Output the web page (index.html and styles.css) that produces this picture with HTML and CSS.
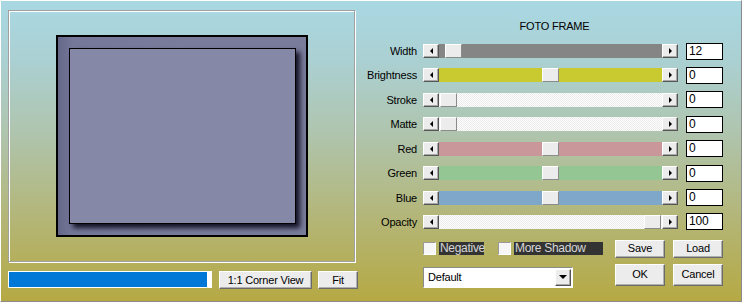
FILE: index.html
```html
<!DOCTYPE html>
<html lang="en">

<head>
    <meta charset="UTF-8">
    <title>Foto Frame</title>
    <link rel="stylesheet" href="styles.css">
</head>

<body>
    <div class="window">
        <div class="left">
            <div class="preview">
                <div class="frame">
                    <div class="photo"></div>
                </div>
            </div>
            <div class="bottom-bar">
                <div class="progress">
                    <div class="progress-fill" style="width: 198px"></div>
                </div>
                <button class="btn corner">1:1 Corner View</button>
                <button class="btn fit">Fit</button>
            </div>
        </div>

        <div class="right">
            <div class="title">FOTO FRAME</div>

            <div class="row">
                <span class="label">Width</span>
                <div class="slider">
                    <span class="arrow-btn"><i class="arrow-left"></i></span>
                    <div class="track track-gray"><span class="thumb" style="margin-left: 6px"></span></div>
                    <span class="arrow-btn"><i class="arrow-right"></i></span>
                </div>
                <div class="value">12</div>
            </div>
            <div class="row">
                <span class="label">Brightness</span>
                <div class="slider">
                    <span class="arrow-btn"><i class="arrow-left"></i></span>
                    <div class="track track-yellow"><span class="thumb" style="margin-left: 103px"></span></div>
                    <span class="arrow-btn"><i class="arrow-right"></i></span>
                </div>
                <div class="value">0</div>
            </div>
            <div class="row">
                <span class="label">Stroke</span>
                <div class="slider">
                    <span class="arrow-btn"><i class="arrow-left"></i></span>
                    <div class="track track-light"><span class="thumb" style="margin-left: 1px"></span></div>
                    <span class="arrow-btn"><i class="arrow-right"></i></span>
                </div>
                <div class="value">0</div>
            </div>
            <div class="row">
                <span class="label">Matte</span>
                <div class="slider">
                    <span class="arrow-btn"><i class="arrow-left"></i></span>
                    <div class="track track-light"><span class="thumb" style="margin-left: 1px"></span></div>
                    <span class="arrow-btn"><i class="arrow-right"></i></span>
                </div>
                <div class="value">0</div>
            </div>
            <div class="row">
                <span class="label">Red</span>
                <div class="slider">
                    <span class="arrow-btn"><i class="arrow-left"></i></span>
                    <div class="track track-red"><span class="thumb" style="margin-left: 103px"></span></div>
                    <span class="arrow-btn"><i class="arrow-right"></i></span>
                </div>
                <div class="value">0</div>
            </div>
            <div class="row">
                <span class="label">Green</span>
                <div class="slider">
                    <span class="arrow-btn"><i class="arrow-left"></i></span>
                    <div class="track track-green"><span class="thumb" style="margin-left: 103px"></span></div>
                    <span class="arrow-btn"><i class="arrow-right"></i></span>
                </div>
                <div class="value">0</div>
            </div>
            <div class="row">
                <span class="label">Blue</span>
                <div class="slider">
                    <span class="arrow-btn"><i class="arrow-left"></i></span>
                    <div class="track track-blue"><span class="thumb" style="margin-left: 103px"></span></div>
                    <span class="arrow-btn"><i class="arrow-right"></i></span>
                </div>
                <div class="value">0</div>
            </div>
            <div class="row">
                <span class="label">Opacity</span>
                <div class="slider">
                    <span class="arrow-btn"><i class="arrow-left"></i></span>
                    <div class="track track-light"><span class="thumb" style="margin-left: 205px"></span></div>
                    <span class="arrow-btn"><i class="arrow-right"></i></span>
                </div>
                <div class="value">100</div>
            </div>

            <div class="options">
                <span class="checkbox"></span>
                <span class="check-label negative">Negative</span>
                <span class="checkbox shadow-box"></span>
                <span class="check-label more-shadow">More Shadow</span>
                <button class="btn save">Save</button>
                <button class="btn load">Load</button>
            </div>

            <div class="actions">
                <div class="dropdown">
                    <span class="dropdown-text">Default</span>
                    <span class="dropdown-btn"><i class="arrow-down"></i></span>
                </div>
                <button class="btn ok">OK</button>
                <button class="btn cancel">Cancel</button>
            </div>
        </div>
    </div>
</body>

</html>
```

FILE: styles.css
```css
* {
    box-sizing: border-box;
}

body {
    margin: 0;
    background-color: #fff;
    font-family: "Liberation Sans", Arial, sans-serif;
    font-size: 11px;
    letter-spacing: -0.2px;
    color: #000;
}

.window {
    width: 742px;
    height: 302px;
    display: flex;
    border-top: 1px solid #fff;
    border-left: 1px solid #fff;
    border-right: 1px solid #8a8a8a;
    border-bottom: 1px solid #8a8a8a;
    background: linear-gradient(#a9d8e3 0%, #abd0d2 20%, #afc4ac 45%, #b3b77c 70%, #b6a944 100%);
}

/* preview side */
.left {
    width: 360px;
    padding: 9px 0 0 7px;
}

.preview {
    width: 347px;
    height: 252px;
    border: 1px solid #a0a0a0;
    box-shadow: 1px 1px 0 #fff, inset 1px 1px 0 #fff;
    display: flex;
    align-items: center;
    justify-content: center;
}

.frame {
    width: 252px;
    height: 202px;
    border: 2px solid #000;
    padding: 11px 10px 11px 11px;
    background: linear-gradient(90deg, #66688a 0%, #76789a 6%, #7a7c9c 50%, #7a7c9c 100%);
}

.photo {
    width: 227px;
    height: 176px;
    border: 1px solid #000;
    background-color: #8588a7;
    box-shadow: 4px 4px 5px rgba(8, 8, 24, 0.9);
}

.bottom-bar {
    display: flex;
    margin-top: 9px;
    height: 18px;
}

.progress {
    width: 204px;
    height: 17px;
    padding: 1px;
    background-color: #fff;
}

.progress-fill {
    height: 100%;
    background-color: #0078d7;
}

/* buttons */
.btn {
    font-family: inherit;
    font-size: 11px;
    letter-spacing: -0.2px;
    color: #000;
    padding: 0;
    background-color: #ececec;
    border: 1px solid;
    border-color: #fff #6a6a6a #6a6a6a #fff;
    box-shadow: inset -1px -1px 0 #b0b0b0;
    line-height: 1;
}

.corner {
    width: 93px;
    height: 18px;
    margin-left: 7px;
}

.fit {
    width: 40px;
    height: 18px;
    margin-left: 6px;
}

/* controls side */
.right {
    width: 379px;
    padding-top: 18px;
}

.title {
    height: 14px;
    line-height: 14px;
    text-align: center;
    padding-left: 8px;
    margin-bottom: 11px;
}

.row {
    display: flex;
    align-items: center;
    height: 14px;
}

.row + .row {
    margin-top: 10.43px;
}

.label {
    width: 62px;
    padding-right: 6px;
    text-align: right;
    white-space: nowrap;
}

.slider {
    display: flex;
    width: 255px;
    height: 14px;
}

.arrow-btn {
    width: 16px;
    height: 14px;
    display: flex;
    align-items: center;
    justify-content: center;
    background-color: #ececec;
    border: 1px solid;
    border-color: #fff #555 #555 #fff;
    box-shadow: inset -1px -1px 0 #a8a8a8;
}

.arrow-left {
    width: 0;
    height: 0;
    border-top: 3px solid transparent;
    border-bottom: 3px solid transparent;
    border-right: 3px solid #000;
}

.arrow-right {
    width: 0;
    height: 0;
    border-top: 3px solid transparent;
    border-bottom: 3px solid transparent;
    border-left: 3px solid #000;
}

.track {
    flex: 1;
    display: flex;
}

.track-gray {
    background-color: #858585;
}

.track-yellow {
    background-color: #c9c930;
}

.track-light {
    background: repeating-conic-gradient(#fdfdfd 0 25%, #ececec 0 50%) 0 0 / 2px 2px;
}

.track-red {
    background-color: #c99699;
}

.track-green {
    background-color: #94c693;
}

.track-blue {
    background-color: #7fa7ca;
}

.thumb {
    width: 17px;
    height: 14px;
    background-color: #ececec;
    border: 1px solid;
    border-color: #fff #8a8a8a #8a8a8a #fff;
}

.value {
    width: 37px;
    height: 17px;
    margin-left: 8px;
    padding-left: 2px;
    font-size: 12px;
    line-height: 15px;
    border: 1px solid #000;
    background-color: #fff;
}

/* checkboxes and presets */
.options {
    display: flex;
    align-items: center;
    height: 18px;
    margin-top: 11px;
    padding-left: 62px;
}

.checkbox {
    width: 13px;
    height: 13px;
    background-color: #f6f6f6;
    border: 1px solid;
    border-color: #9a9a9a #fff #fff #9a9a9a;
}

.shadow-box {
    margin-left: 14px;
}

.check-label {
    height: 13px;
    line-height: 13px;
    margin-left: 3px;
    padding-left: 1px;
    font-size: 12px;
    letter-spacing: -0.3px;
    background-color: #333;
    color: #d6d6d6;
}

.negative {
    width: 45px;
}

.more-shadow {
    width: 89px;
}

.save {
    width: 50px;
    height: 18px;
    margin-left: 12px;
}

.load {
    width: 50px;
    height: 18px;
    margin-left: 8px;
}

.actions {
    display: flex;
    align-items: flex-start;
    margin-top: 6px;
    padding-left: 62px;
}

.dropdown {
    width: 150px;
    height: 21px;
    margin-top: 3px;
    display: flex;
    align-items: center;
    justify-content: space-between;
    background-color: #fff;
    border: 1px solid;
    border-color: #8a8a8a #fff #fff #8a8a8a;
    padding: 1px 1px 1px 4px;
}

.dropdown-btn {
    width: 16px;
    height: 17px;
    display: flex;
    align-items: center;
    justify-content: center;
    background-color: #ececec;
    border: 1px solid;
    border-color: #fff #555 #555 #fff;
    box-shadow: inset -1px -1px 0 #a8a8a8;
}

.arrow-down {
    width: 0;
    height: 0;
    border-left: 4px solid transparent;
    border-right: 4px solid transparent;
    border-top: 4px solid #000;
}

.ok {
    width: 50px;
    height: 22px;
    margin-left: 42px;
}

.cancel {
    width: 50px;
    height: 22px;
    margin-left: 8px;
}
```
